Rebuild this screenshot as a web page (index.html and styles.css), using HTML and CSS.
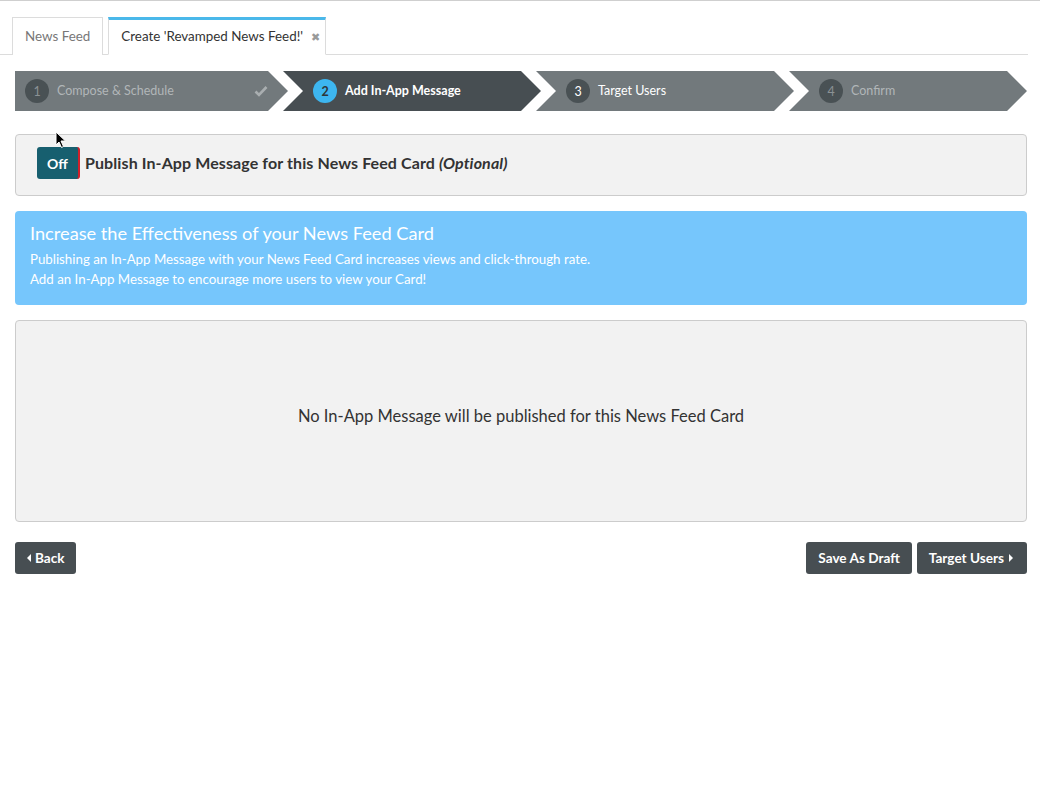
FILE: index.html
```html
<!DOCTYPE html>
<html>
<head>
<meta charset="utf-8">
<link rel="stylesheet" href="styles.css">
</head>
<body>
<div class="page">
  <div class="tabs">
    <div class="tab">News Feed</div>
    <div class="tab active">Create 'Revamped News Feed!' <span class="close">&#10006;</span></div>
  </div>

  <div class="steps">
    <div class="step s1 done"><span class="num">1</span><span class="label">Compose &amp; Schedule</span>
      <svg class="check" width="14" height="12" viewBox="0 0 14 12"><path d="M1.5 6.5 L5 10 L12.5 2" fill="none" stroke="#a9aeb0" stroke-width="2.6"/></svg>
    </div>
    <div class="step s2 current"><span class="num">2</span><span class="label">Add In-App Message</span></div>
    <div class="step s3 next"><span class="num">3</span><span class="label">Target Users</span></div>
    <div class="step s4 future"><span class="num">4</span><span class="label">Confirm</span></div>
  </div>

  <div class="panel toggle-panel">
    <button class="toggle">Off</button>
    <span class="toggle-label">Publish In-App Message for this News Feed Card <em>(Optional)</em></span>
  </div>

  <div class="info">
    <div class="info-title">Increase the Effectiveness of your News Feed Card</div>
    <div class="info-line">Publishing an In-App Message with your News Feed Card increases views and click-through rate.</div>
    <div class="info-line">Add an In-App Message to encourage more users to view your Card!</div>
  </div>

  <div class="panel empty-panel">No In-App Message will be published for this News Feed Card</div>

  <div class="actions">
    <button class="btn"><span class="caret-l"></span>Back</button>
    <div class="right">
      <button class="btn">Save As Draft</button>
      <button class="btn btn-next">Target Users<span class="caret-r"></span></button>
    </div>
  </div>

  <svg class="cursor" width="12" height="18" viewBox="0 0 12 18"><path d="M1 1 L1 14 L4 11 L6.5 16.5 L8.5 15.5 L6 10 L10.5 10 Z" fill="#000" stroke="#fff" stroke-width="1"/></svg>
</div>
</body>
</html>
```

FILE: styles.css
```css
* { box-sizing: border-box; }
html, body { margin: 0; padding: 0; background: #fff; }
body {
  font-family: Lato, "Open Sans", "Liberation Sans", sans-serif;
  color: #333;
  border-top: 1px solid #cfcfcf;
}
.page { position: relative; padding: 16px 13px 0 15px; }

.tabs {
  display: flex;
  gap: 5px;
  margin: 0 -1px 0 -15px;
  padding-left: 12px;
  border-bottom: 1px solid #dcdcdc;
  height: 38px;
}
.tab {
  height: 38px;
  margin-bottom: -1px;
  border: 1px solid #dcdcdc;
  border-bottom: none;
  padding: 0 12px;
  font-size: 13.4px;
  line-height: 36px;
  color: #777;
  background: #fff;
}
.tab.active {
  border-top: 3px solid #4ab8ea;
  line-height: 33px;
  color: #333;
  border-bottom: 1px solid #fff;
  height: 38px;
  font-size: 13.4px;
  padding: 0 5px 0 12px;
}
.close { color: #9a9a9a; font-size: 11px; margin-left: 5px; }

.steps {
  display: flex;
  margin-top: 16px;
  height: 40px;
}
.step {
  height: 40px;
  display: flex;
  align-items: center;
  background: #72797c;
  font-size: 12.5px;
  color: #fff;
  padding-left: 30px;
  clip-path: polygon(0 0, calc(100% - 20px) 0, 100% 50%, calc(100% - 20px) 100%, 0 100%, 20px 50%);
  margin-left: -5px;
}
.s1 { width: 273px; padding-left: 10px; margin-left: 0; clip-path: polygon(0 0, calc(100% - 20px) 0, 100% 50%, calc(100% - 20px) 100%, 0 100%); }
.s2 { width: 258px; }
.s3 { width: 258px; }
.s4 { width: 238px; }
.num {
  width: 24px; height: 24px; border-radius: 50%;
  background: #495154;
  display: inline-flex; align-items: center; justify-content: center;
  font-size: 12.5px;
  margin-right: 8px;
  flex: none;
}
.label { position: relative; top: -1px; }
.done .num, .future .num { color: #8b9295; }
.done .label, .future .label { color: #b1b6b8; }
.check { margin-left: auto; margin-right: 20px; }
.current { background: #474e52; font-weight: 700; }
.current .num { background: #3db6f0; color: #2e3538; font-weight: 700; }

.panel {
  background: #f2f2f2;
  border: 1px solid #cccccc;
  border-radius: 4px;
}
.toggle-panel {
  margin-top: 23px;
  height: 62px;
  display: flex;
  align-items: center;
  padding-left: 21px;
}
.toggle {
  width: 43px; height: 32px;
  border: none;
  border-right: 2px solid #d0202a;
  border-radius: 3px;
  background: #175f6f;
  color: #fff;
  font-family: inherit;
  font-size: 14px;
  font-weight: 700;
  padding: 0;
  margin-right: 5px;
  margin-top: -4px;
}
.toggle-label { font-size: 16px; letter-spacing: 0.1px; font-weight: 700; color: #333; position: relative; top: -3px; }
.toggle-label em { font-style: italic; }

.info {
  margin-top: 15px;
  background: #76c6fc;
  border-radius: 4px;
  height: 94px;
  padding: 11px 15px 0;
  color: #fff;
}
.info-title { font-size: 18.2px; line-height: 22px; margin-bottom: 5px; }
.info-line { font-size: 13.3px; line-height: 20px; }

.empty-panel {
  margin-top: 15px;
  height: 202px;
  display: flex;
  align-items: center;
  justify-content: center;
  font-size: 16.5px;
  color: #333;
  padding-bottom: 10px;
}

.actions {
  margin-top: 20px;
  display: flex;
  justify-content: space-between;
}
.right { display: flex; gap: 5px; }
.btn {
  height: 32px;
  border: none;
  border-radius: 3px;
  background: #474e52;
  color: #fff;
  font-family: inherit;
  font-size: 13.6px;
  font-weight: 700;
  padding: 0 12px;
  display: inline-flex;
  align-items: center;
}
.actions > .btn { padding: 0 11px 0 12px; }
.btn-next { padding: 0 14px 0 12px; }
.caret-l, .caret-r { width: 0; height: 0; border-top: 4px solid transparent; border-bottom: 4px solid transparent; }
.caret-l { border-right: 4px solid #fff; margin-right: 4px; }
.caret-r { border-left: 4px solid #fff; margin-left: 5px; }

.cursor { position: absolute; left: 55px; top: 130px; }
```
